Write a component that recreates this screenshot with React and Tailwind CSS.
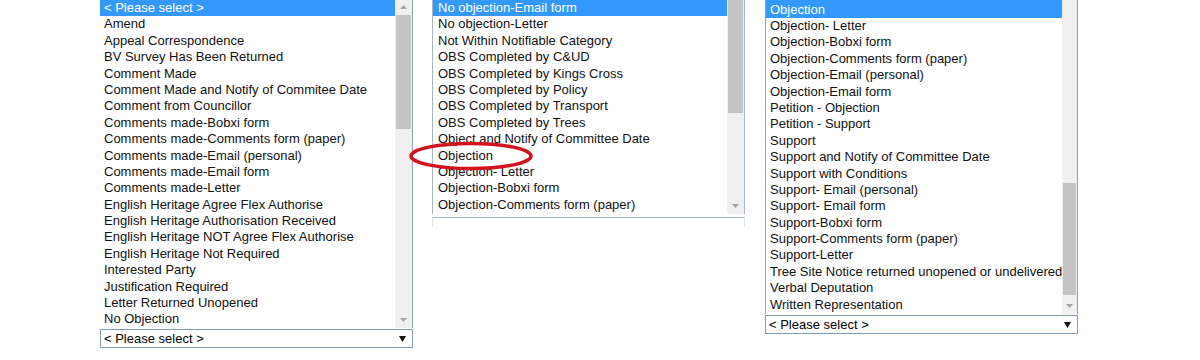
import React from 'react';

const leftItems = [
  '< Please select >',
  'Amend',
  'Appeal Correspondence',
  'BV Survey Has Been Returned',
  'Comment Made',
  'Comment Made and Notify of Commitee Date',
  'Comment from Councillor',
  'Comments made-Bobxi form',
  'Comments made-Comments form (paper)',
  'Comments made-Email (personal)',
  'Comments made-Email form',
  'Comments made-Letter',
  'English Heritage Agree Flex Authorise',
  'English Heritage Authorisation Received',
  'English Heritage NOT Agree Flex Authorise',
  'English Heritage Not Required',
  'Interested Party',
  'Justification Required',
  'Letter Returned Unopened',
  'No Objection',
];

const middleItems = [
  'No objection-Email form',
  'No objection-Letter',
  'Not Within Notifiable Category',
  'OBS Completed by C&UD',
  'OBS Completed by Kings Cross',
  'OBS Completed by Policy',
  'OBS Completed by Transport',
  'OBS Completed by Trees',
  'Object and Notify of Committee Date',
  'Objection',
  'Objection- Letter',
  'Objection-Bobxi form',
  'Objection-Comments form (paper)',
];

const rightItems = [
  'Objection',
  'Objection- Letter',
  'Objection-Bobxi form',
  'Objection-Comments form (paper)',
  'Objection-Email (personal)',
  'Objection-Email form',
  'Petition - Objection',
  'Petition - Support',
  'Support',
  'Support and Notify of Committee Date',
  'Support with Conditions',
  'Support- Email (personal)',
  'Support- Email form',
  'Support-Bobxi form',
  'Support-Comments form (paper)',
  'Support-Letter',
  'Tree Site Notice returned unopened or undelivered',
  'Verbal Deputation',
  'Written Representation',
];

function Arrow({ up }) {
  return (
    <div className="h-[17px] flex items-center justify-center">
      <svg width="7" height="4" viewBox="0 0 7 4">
        <polygon points={up ? '0,4 7,4 3.5,0' : '0,0 7,0 3.5,4'} fill="#a3a3a3" />
      </svg>
    </div>
  );
}

function Options({ items, pad, firstClass = 'h-[16.4px]' }) {
  return (
    <div className="flex-1 min-w-0">
      {items.map((item, i) => (
        <div
          key={item + i}
          className={
            'leading-[16.4px] whitespace-nowrap overflow-hidden ' +
            pad +
            (i === 0 ? ' bg-[#3399ff] text-white ' + firstClass : ' h-[16.4px] text-[#111]')
          }
        >
          {item}
        </div>
      ))}
    </div>
  );
}

function SelectBox() {
  return (
    <div className="h-[19px] border border-[#7f9db9] bg-white flex items-center justify-between pl-[3px] pr-[6px] leading-none">
      <span>&lt; Please select &gt;</span>
      <svg width="7" height="6" viewBox="0 0 7 6">
        <polygon points="0,0 7,0 3.5,6" fill="#111" />
      </svg>
    </div>
  );
}

export default function App() {
  return (
    <div className="w-[1200px] h-[360px] bg-white overflow-hidden flex items-start pl-[100px] font-['Liberation_Sans',Arial,sans-serif] text-[13px]">
      {/* Left list */}
      <div className="w-[313px] -mt-[2px]">
        <div className="flex h-[330px] border-r border-[#8da2b8]">
          <div className="flex-1 pt-[2px]">
            <Options items={leftItems} pad="pl-[4px]" />
          </div>
          <div className="w-[17px] bg-[#f0f0f0] flex flex-col">
            <Arrow up />
            <div className="h-[114px] mx-[1px] bg-[#c4c4c4]" />
            <div className="flex-1" />
            <Arrow />
          </div>
        </div>
        <div className="pt-[1px]">
          <SelectBox />
        </div>
      </div>

      {/* Middle list */}
      <div className="w-[313px] ml-[19px] relative">
        <div className="flex h-[214px] border-l border-r border-[#a9b6c4]">
          <Options items={middleItems} pad="pl-[5px]" />
          <div className="w-[17px] bg-[#f0f0f0] flex flex-col">
            <div className="h-[113px] mx-[1px] bg-[#c4c4c4]" />
            <div className="flex-1" />
            <Arrow />
          </div>
        </div>
        <div className="h-[10px] mt-[3px] border-t border-[#a9b6c4] border-l border-l-[#dde3ea] border-r border-r-[#dde3ea]" />
        <svg
          className="absolute left-[-24px] top-[141px]"
          width="126"
          height="30"
          viewBox="0 0 126 30"
        >
          <ellipse cx="63" cy="15" rx="60" ry="12.5" fill="none" stroke="#d2121c" strokeWidth="3.5" />
        </svg>
      </div>

      {/* Right list */}
      <div className="w-[313px] ml-[20px]">
        <div className="flex h-[314px] border-l border-r border-[#8da2b8]">
          <div className="flex-1">
            <Options items={rightItems} pad="pl-[4px]" firstClass="h-[18px] pt-[1.6px]" />
          </div>
          <div className="w-[17px] bg-[#f0f0f0] flex flex-col">
            <div className="h-[183px]" />
            <div className="h-[112px] mx-[1px] bg-[#c4c4c4]" />
            <div className="flex-1" />
            <Arrow />
          </div>
        </div>
        <div className="pt-[1px]">
          <SelectBox />
        </div>
      </div>
    </div>
  );
}
